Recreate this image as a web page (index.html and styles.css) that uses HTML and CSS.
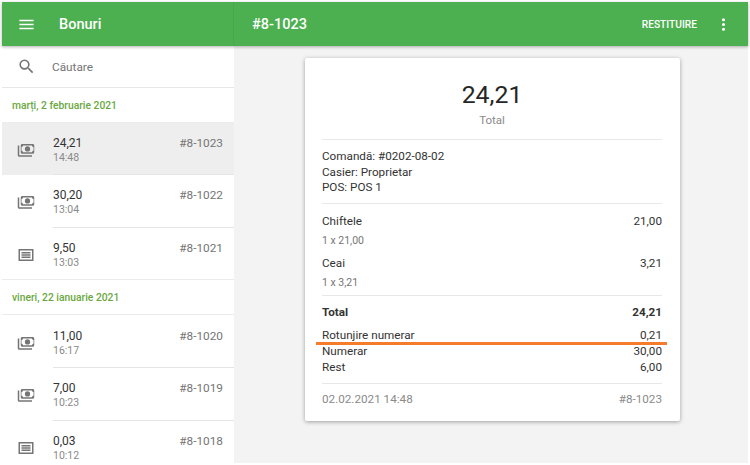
FILE: index.html
```html
<!DOCTYPE html>
<html lang="ro">
<head>
<meta charset="utf-8">
<title>Bonuri</title>
<link rel="stylesheet" href="styles.css">
</head>
<body>
<svg class="defs" width="0" height="0">
  <symbol id="cash" viewBox="0 0 24 24"><path fill-rule="evenodd" d="M3 6H1v13c0 1.100.9 2 2 2h17v-2H3V6zm18-2H7c-1.100 0-2 .9-2 2v9c0 1.100.9 2 2 2h14c1.100 0 2-.9 2-2V6c0-1.100-.9-2-2-2zm-1 11H8c0-1.100-.9-2-2-2V8c1.100 0 2-.9 2-2h12c0 1.100.9 2 2 2v5c-1.100 0-2 .9-2 2zm-6-8a3.500 3.500 0 1 0 0 7 3.500 3.500 0 0 0 0-7z"/></symbol>
  <symbol id="receipt" viewBox="0 0 24 24"><path fill-rule="evenodd" d="M2 4h20v16H2V4zm2 2v12h16V6H4zm2 2h12v2H6V8zm0 3h12v2H6v-2zm0 3h12v2H6v-2z"/></symbol>
</svg>
<div class="app">
  <header class="appbar">
    <div class="bar-left">
      <svg class="bar-icon" viewBox="0 0 24 24"><path d="M3 18h18v-2H3v2zm0-5h18v-2H3v2zm0-7v2h18V6H3z"/></svg>
      <span class="bar-title">Bonuri</span>
    </div>
    <div class="bar-right">
      <span class="bar-number">#8-1023</span>
      <span class="bar-action">RESTITUIRE</span>
      <svg class="bar-icon more" viewBox="0 0 24 24"><path d="M12 8a2 2 0 1 0 0-4 2 2 0 0 0 0 4zm0 2a2 2 0 1 0 0 4 2 2 0 0 0 0-4zm0 6a2 2 0 1 0 0 4 2 2 0 0 0 0-4z"/></svg>
    </div>
  </header>
  <div class="main">
    <aside class="sidebar">
      <div class="search">
        <svg class="search-icon" viewBox="0 0 24 24"><path d="M15.500 14h-.79l-.28-.27A6.470 6.470 0 0 0 16 9.500 6.500 6.500 0 1 0 9.500 16c1.610 0 3.090-.59 4.230-1.570l.27.28v.79l5 4.990L20.490 19l-4.990-5zm-6 0C7.010 14 5 11.990 5 9.500S7.010 5 9.500 5 14 7.010 14 9.500 11.990 14 9.500 14z"/></svg>
        <span>Căutare</span>
      </div>
      <div class="date">marți, 2 februarie 2021</div>
      <div class="row selected">
        <svg class="row-icon"><use href="#cash"/></svg>
        <div class="row-body"><div class="row-line"><span class="amount">24,21</span><span class="num">#8-1023</span></div><div class="time">14:48</div></div>
      </div>
      <div class="row">
        <svg class="row-icon"><use href="#cash"/></svg>
        <div class="row-body"><div class="row-line"><span class="amount">30,20</span><span class="num">#8-1022</span></div><div class="time">13:04</div></div>
      </div>
      <div class="row last">
        <svg class="row-icon"><use href="#receipt"/></svg>
        <div class="row-body"><div class="row-line"><span class="amount">9,50</span><span class="num">#8-1021</span></div><div class="time">13:03</div></div>
      </div>
      <div class="date">vineri, 22 ianuarie 2021</div>
      <div class="row">
        <svg class="row-icon"><use href="#cash"/></svg>
        <div class="row-body"><div class="row-line"><span class="amount">11,00</span><span class="num">#8-1020</span></div><div class="time">16:17</div></div>
      </div>
      <div class="row">
        <svg class="row-icon"><use href="#cash"/></svg>
        <div class="row-body"><div class="row-line"><span class="amount">7,00</span><span class="num">#8-1019</span></div><div class="time">10:23</div></div>
      </div>
      <div class="row last">
        <svg class="row-icon"><use href="#receipt"/></svg>
        <div class="row-body"><div class="row-line"><span class="amount">0,03</span><span class="num">#8-1018</span></div><div class="time">10:12</div></div>
      </div>
    </aside>
    <main class="content">
      <section class="receipt">
        <div class="head">
          <div class="head-total">24,21</div>
          <div class="head-label">Total</div>
        </div>
        <div class="info">
          <div>Comandă: #0202-08-02</div>
          <div>Casier: Proprietar</div>
          <div>POS: POS 1</div>
        </div>
        <div class="items">
          <div class="item"><div class="line"><span>Chiftele</span><span>21,00</span></div><div class="sub">1 x 21,00</div></div>
          <div class="item"><div class="line"><span>Ceai</span><span>3,21</span></div><div class="sub">1 x 3,21</div></div>
        </div>
        <div class="totals">
          <div class="line strong"><span>Total</span><span>24,21</span></div>
          <div class="line"><span>Rotunjire numerar</span><span>0,21</span></div>
          <div class="line"><span>Numerar</span><span>30,00</span></div>
          <div class="line"><span>Rest</span><span>6,00</span></div>
          <div class="underline"></div>
        </div>
        <div class="foot"><span>02.02.2021 14:48</span><span>#8-1023</span></div>
      </section>
    </main>
  </div>
</div>
</body>
</html>
```
FILE: styles.css
```css
* { box-sizing: border-box; }
html, body { margin: 0; height: 100%; overflow: hidden; }
body {
  background: #fff;
  font-family: Roboto, "Liberation Sans", sans-serif;
  color: #333;
  padding: 2px;
}
.defs { position: absolute; }
.app { height: 461px; display: flex; flex-direction: column; background: #f3f3f3; }
.appbar {
  height: 44px;
  flex: none;
  display: flex;
  background: #4caf50;
  color: #fff;
  position: relative;
  z-index: 2;
  box-shadow: 0 1px 3px rgba(0,0,0,.3);
}
.bar-left {
  width: 232px;
  flex: none;
  display: flex;
  align-items: center;
  padding-left: 15px;
  border-right: 1px solid #48a64c;
}
.bar-icon { width: 19px; height: 19px; fill: #fff; flex: none; }
.bar-title { margin-left: 23px; font-size: 14.500px; font-weight: 500; }
.bar-right { flex: 1; display: flex; align-items: center; padding: 0 15px 0 18px; }
.bar-number { font-size: 14.500px; font-weight: 500; flex: 1; }
.bar-action { font-size: 10.200px; font-weight: 500; }
.more { margin-left: 17px; }
.main { flex: 1; display: flex; min-height: 0; }
.sidebar { width: 232px; flex: none; background: #fff; overflow: hidden; }
.search {
  height: 41.600px;
  display: flex;
  align-items: center;
  padding: 1px 0 0 15px;
  border-bottom: 1px solid #e7e7e7;
  font-size: 11.800px;
  color: #757575;
}
.search-icon { width: 19px; height: 19px; fill: #757575; margin-right: 16px; }
.date {
  height: 35px;
  display: flex;
  align-items: center;
  padding: 1px 0 0 10px;
  font-size: 10.300px;
  font-weight: 500;
  color: #6aa83f;
  border-bottom: 1px solid #ececec;
}
.row { height: 52.600px; display: flex; align-items: center; padding: 2px 11px 0 15px; position: relative; }
.row.selected { background: #eee; }
.row::after { content: ""; position: absolute; left: 51px; right: 0; bottom: 0; height: 1px; background: #e5e5e5; }
.row.last::after { left: 0; background: #ececec; }
.row-icon { width: 18px; height: 18px; fill: #757575; flex: none; margin-right: 18px; }
.row-body { flex: 1; margin-top: 1px; }
.row-line { display: flex; justify-content: space-between; align-items: baseline; }
.amount { font-size: 12px; color: #333; line-height: 15px; }
.num { font-size: 11.800px; color: #757575; }
.time { font-size: 10.500px; color: #8a8a8a; line-height: 14px; }
.content { flex: 1; display: flex; justify-content: center; align-items: flex-start; padding: 12px 0 0 3px; }
.receipt {
  width: 375px;
  height: 363px;
  background: #fff;
  border-radius: 2px;
  padding: 0 18px 0 17px;
  box-shadow: 0 1px 4px rgba(0,0,0,.35);
  font-size: 11.700px;
}
.head { height: 82px; border-bottom: 1px solid #e8e8e8; text-align: center; padding-top: 21px; }
.head-total { font-size: 24.800px; line-height: 32px; color: #262626; }
.head-label { font-size: 11.500px; line-height: 18px; color: #8a8a8a; }
.info { height: 64px; border-bottom: 1px solid #e8e8e8; padding-top: 9px; line-height: 15.500px; }
.items { height: 92px; border-bottom: 1px solid #e8e8e8; padding-top: 10px; }
.item { height: 42px; }
.line { display: flex; justify-content: space-between; line-height: 15.800px; }
.sub { font-size: 10.500px; color: #757575; line-height: 15px; margin-top: 3px; }
.totals { height: 88px; border-bottom: 1px solid #e8e8e8; padding-top: 9px; position: relative; }
.strong { font-weight: 700; margin-bottom: 7.500px; }
.underline { position: absolute; left: -6px; right: -5px; top: 46px; height: 3px; background: #f57c2a; }
.foot { display: flex; justify-content: space-between; padding-top: 8px; color: #8a8a8a; line-height: 15.500px; }
```
